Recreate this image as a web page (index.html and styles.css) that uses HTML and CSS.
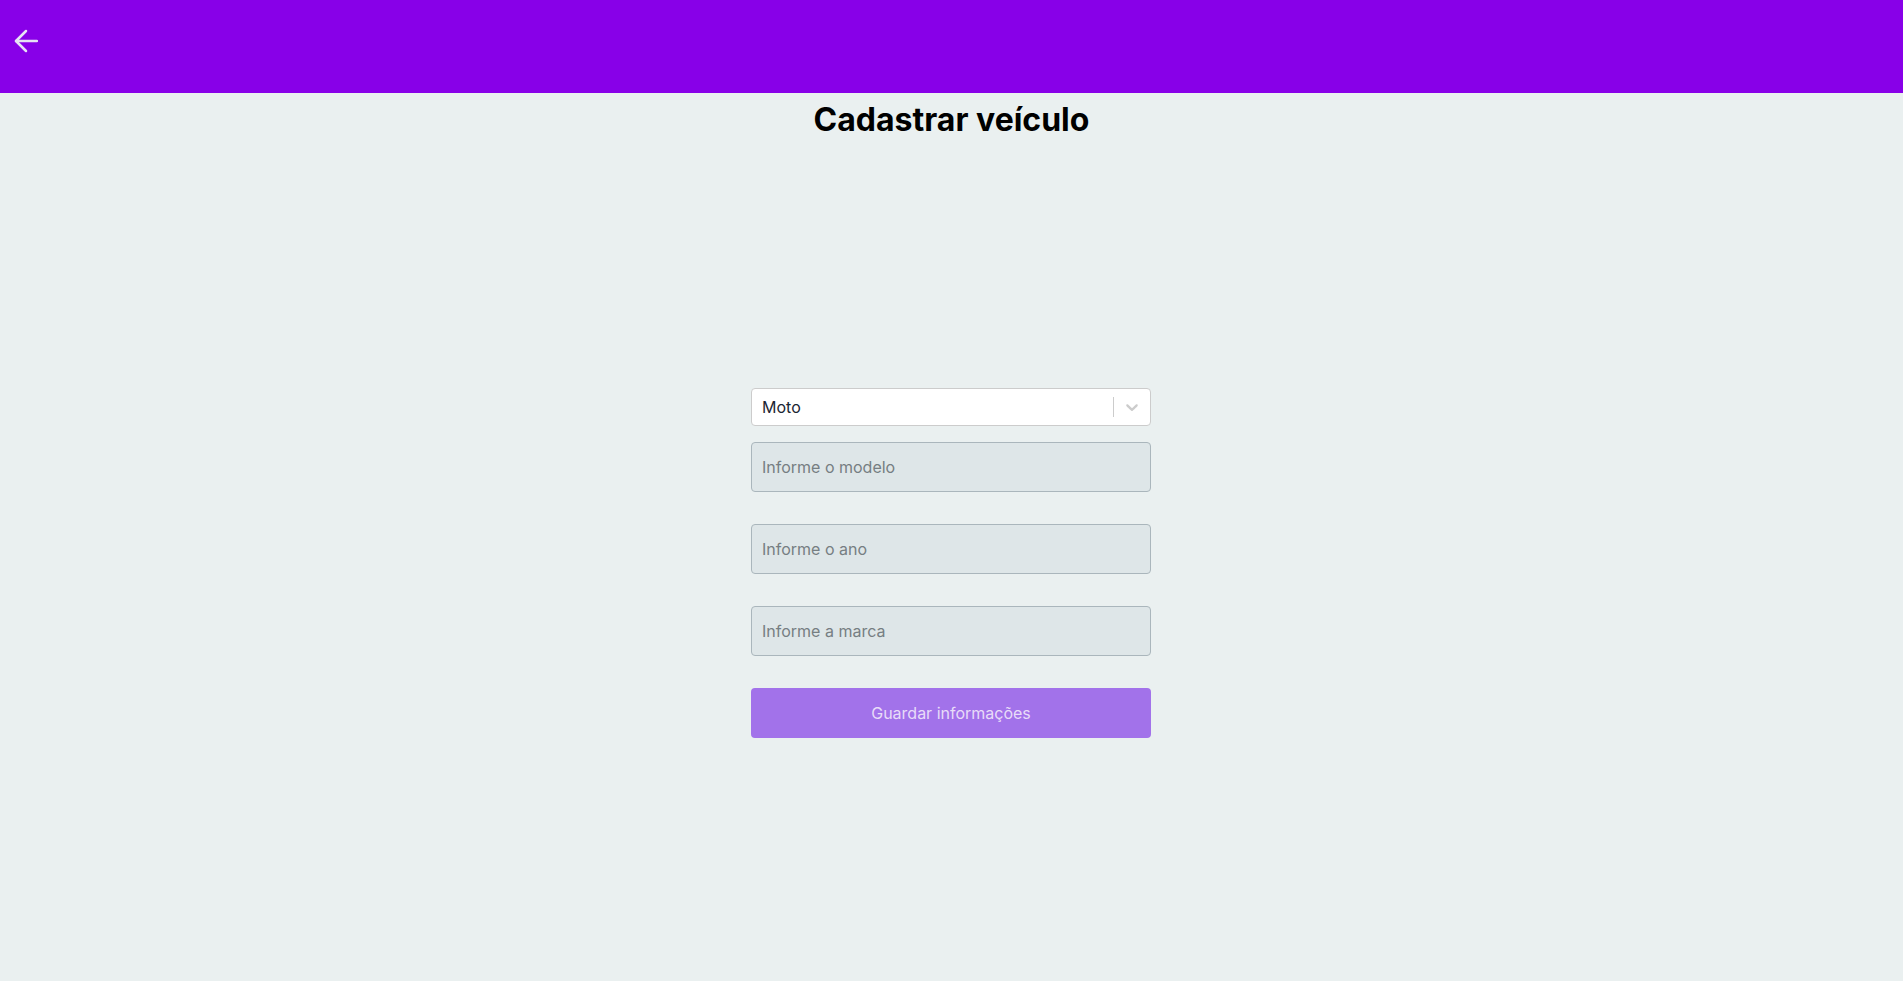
FILE: index.html
```html
<!DOCTYPE html>
<html lang="pt-BR">
<head>
<meta charset="utf-8">
<title>Cadastrar veículo</title>
<link rel="stylesheet" href="styles.css">
</head>
<body>
<header class="topbar">
  <button class="back" aria-label="Voltar">
    <svg width="24" height="24" viewBox="0 0 24 24" fill="none" stroke="currentColor" stroke-width="2.5" stroke-linecap="round" stroke-linejoin="round">
      <line x1="23" y1="12" x2="2" y2="12"/>
      <polyline points="12,2 2,12 12,22"/>
    </svg>
  </button>
</header>
<main class="page">
  <h1 class="title">Cadastrar veículo</h1>
  <form class="form">
    <div class="select">
      <span class="select-value">Moto</span>
      <span class="select-sep"></span>
      <span class="select-chevron">
        <svg width="20" height="20" viewBox="0 0 20 20"><path d="M4.516 7.548c0.436-0.446 1.043-0.481 1.576 0l3.908 3.747 3.908-3.747c0.533-0.481 1.141-0.446 1.574 0 0.436 0.445 0.408 1.197 0 1.615-0.406 0.418-4.695 4.502-4.695 4.502-0.217 0.223-0.502 0.335-0.787 0.335s-0.57-0.112-0.789-0.335c0 0-4.287-4.084-4.695-4.502s-0.436-1.17 0-1.615z" fill="currentColor"/></svg>
      </span>
    </div>
    <input class="field" type="text" placeholder="Informe o modelo">
    <input class="field" type="text" placeholder="Informe o ano">
    <input class="field" type="text" placeholder="Informe a marca">
    <button class="submit" type="button">Guardar informações</button>
  </form>
</main>
</body>
</html>
```
FILE: styles.css
```css
* { box-sizing: border-box; }
html, body {
  margin: 0;
  padding: 0;
  background: #eaf0f0;
  font-family: Inter, "Noto Sans", sans-serif;
  min-height: 100vh;
}
.topbar {
  height: 93px;
  background: #8800e8;
  display: flex;
  align-items: flex-start;
  padding: 29px 0 0 14px;
}
.back {
  background: none;
  border: 0;
  padding: 0;
  color: #e6e2f4;
  display: flex;
  cursor: pointer;
}
.page {
  display: flex;
  flex-direction: column;
  align-items: center;
}
.title {
  margin: 8px 0 0;
  font-size: 32px;
  font-weight: 700;
  color: #000;
  line-height: 1.2;
}
.form {
  width: 400px;
  margin: 249px 1px 0 0;
  display: flex;
  flex-direction: column;
}
.select {
  height: 38px;
  background: #fff;
  border: 1px solid #cccccc;
  border-radius: 4px;
  display: flex;
  align-items: center;
  padding-left: 10px;
  margin-bottom: 16px;
}
.select-value {
  flex: 1;
  font-size: 16px;
  color: #1b2533;
}
.select-sep {
  width: 1px;
  height: 20px;
  background: #cccccc;
}
.select-chevron {
  width: 36px;
  display: flex;
  justify-content: center;
  color: #cccccc;
}
.field {
  height: 50px;
  background: #dee6e8;
  border: 1px solid #aab6bc;
  border-radius: 4px;
  padding: 0 10px;
  font-family: inherit;
  font-size: 16px;
  color: #222;
  margin-bottom: 32px;
  outline: none;
}
.field::placeholder { color: #767e82; }
.submit {
  height: 50px;
  background: #a272ea;
  border: 0;
  border-radius: 4px;
  color: #e8dcf8;
  font-family: inherit;
  font-size: 16px;
  cursor: pointer;
}
```
